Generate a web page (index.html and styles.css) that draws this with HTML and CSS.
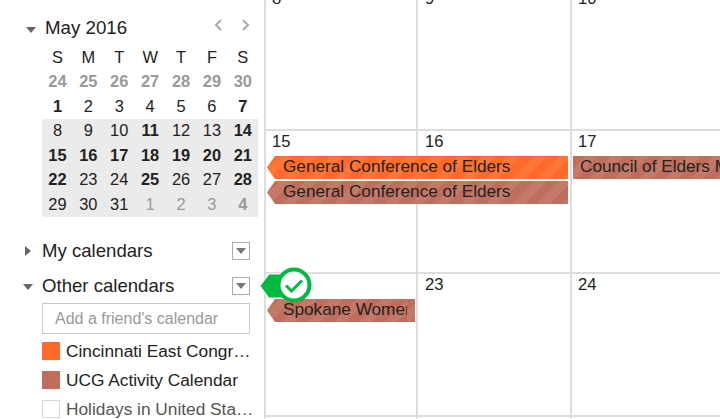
FILE: index.html
```html
<!DOCTYPE html>
<html lang="en">
<head>
    <meta charset="UTF-8">
    <title>Calendar</title>
    <link rel="stylesheet" href="styles.css">
</head>
<body>
    <div class="sidebar">
        <div class="month-header">
            <span class="arrow-down"></span>
            <span class="month-title">May 2016</span>
            <svg class="nav-arrows" width="46" height="14" viewBox="0 0 46 14">
                <path d="M11 2 L6 7 L11 12 M33 2 L38 7 L33 12" fill="none" stroke="#aaa" stroke-width="2"/>
            </svg>
        </div>
        <div class="mini-cal">
            <span class="wd">S</span><span class="wd">M</span><span class="wd">T</span><span class="wd">W</span><span class="wd">T</span><span class="wd">F</span><span class="wd">S</span>
            <b class="off">24</b><b class="off">25</b><b class="off">26</b><b class="off">27</b><b class="off">28</b><b class="off">29</b><b class="off">30</b>
            <b>1</b><span>2</span><span>3</span><span>4</span><span>5</span><span>6</span><b>7</b>
            <span class="sel">8</span><span class="sel">9</span><span class="sel">10</span><b class="sel">11</b><span class="sel">12</span><span class="sel">13</span><b class="sel">14</b>
            <b class="sel">15</b><b class="sel">16</b><b class="sel">17</b><b class="sel">18</b><b class="sel">19</b><b class="sel">20</b><b class="sel">21</b>
            <b class="sel">22</b><span class="sel">23</span><span class="sel">24</span><b class="sel">25</b><span class="sel">26</span><span class="sel">27</span><b class="sel">28</b>
            <span class="sel">29</span><span class="sel">30</span><span class="sel">31</span><span class="sel off">1</span><span class="sel off">2</span><span class="sel off">3</span><b class="sel off">4</b>
        </div>
        <div class="section my-cals">
            <span class="arrow-right"></span>
            <span class="section-title">My calendars</span>
            <span class="drop-btn"><span class="arrow-down small"></span></span>
        </div>
        <div class="section other-cals">
            <span class="arrow-down"></span>
            <span class="section-title">Other calendars</span>
            <span class="drop-btn"><span class="arrow-down small"></span></span>
            <svg class="callout" width="56" height="40" viewBox="0 0 56 40">
                <path d="M1 20 L10 8 H36 V32 H10 Z" fill="#00bb3f" stroke="#fff" stroke-width="1"/>
                <circle cx="35" cy="19" r="15.5" fill="#fff" stroke="#00bb3f" stroke-width="4"/>
                <path d="M27 19.5 L32.5 25 L43 14.5" fill="none" stroke="#00bb3f" stroke-width="3"/>
            </svg>
        </div>
        <div class="friend-input">Add a friend's calendar</div>
        <div class="cal-item"><span class="swatch orange"></span><span class="cal-name">Cincinnati East Congregation</span></div>
        <div class="cal-item"><span class="swatch brown"></span><span class="cal-name">UCG Activity Calendar</span></div>
        <div class="cal-item muted"><span class="swatch empty"></span><span class="cal-name">Holidays in United States</span></div>
    </div>
    <div class="main">
        <div class="week">
            <span class="day">8</span><span class="day">9</span><span class="day">10</span>
        </div>
        <div class="week">
            <span class="day">15</span><span class="day">16</span><span class="day">17</span>
            <div class="event orange-ev start span2">General Conference of Elders</div>
            <div class="event brown-ev cont">Council of Elders Meeting</div>
            <div class="event brown-ev start span2">General Conference of Elders</div>
        </div>
        <div class="week">
            <span class="day"></span><span class="day">23</span><span class="day">24</span>
            <div class="event brown-ev start clipped">Spokane Women's Enrichment</div>
        </div>
        <div class="week last"></div>
    </div>
</body>
</html>
```

FILE: styles.css
```css
body {
    font-family: "Liberation Sans", Arial, sans-serif;
    background-color: #ffffff;
    color: #222222;
    margin: 0;
    padding: 0;
    display: flex;
    height: 419px;
    overflow: hidden;
}

.sidebar {
    width: 264px;
    flex-shrink: 0;
    box-sizing: border-box;
    padding: 16px 14px 0 42px;
}

.month-header {
    display: flex;
    align-items: center;
    height: 24px;
    position: relative;
}

.month-title {
    margin-left: 3px;
    font-size: 18.7px;
}

.arrow-down {
    position: absolute;
    left: -16px;
    top: 11px;
    width: 0;
    height: 0;
    border-left: 5px solid transparent;
    border-right: 5px solid transparent;
    border-top: 6px solid #666666;
}

.arrow-down.small {
    position: static;
    display: block;
    border-top-color: #777777;
}

.arrow-right {
    position: absolute;
    left: -17px;
    top: 4px;
    width: 0;
    height: 0;
    border-top: 5px solid transparent;
    border-bottom: 5px solid transparent;
    border-left: 6px solid #666666;
}

.nav-arrows {
    position: absolute;
    left: 168px;
    top: 2px;
}

.mini-cal {
    display: grid;
    grid-template-columns: repeat(7, 30.9px);
    grid-auto-rows: 24.5px;
    margin-top: 5px;
    font-size: 16.4px;
}

.mini-cal span, .mini-cal b {
    display: flex;
    align-items: center;
    justify-content: center;
}

.mini-cal .sel {
    background-color: #ebebeb;
}

.mini-cal .off {
    color: #999999;
}

.section {
    position: relative;
    display: flex;
    align-items: center;
    height: 18px;
}

.my-cals {
    margin-top: 25px;
}

.other-cals {
    margin-top: 17px;
}

.other-cals .arrow-down {
    left: -19px;
    top: 7px;
}

.other-cals .section-title {
    padding-top: 1px;
}

.section-title {
    font-size: 18.6px;
}

.drop-btn {
    position: absolute;
    left: 190px;
    top: 0;
    box-sizing: border-box;
    width: 18px;
    height: 18px;
    border: 1px solid #aaaaaa;
    display: flex;
    align-items: center;
    justify-content: center;
}

.callout {
    position: absolute;
    left: 217px;
    top: -11px;
    z-index: 2;
}

.friend-input {
    box-sizing: border-box;
    width: 208px;
    height: 31px;
    margin-top: 8px;
    padding-left: 12px;
    border: 1px solid #c8c8c8;
    color: #999999;
    font-size: 16px;
    line-height: 29px;
}

.cal-item {
    display: flex;
    align-items: center;
    width: 212px;
    height: 18px;
    margin-top: 11px;
    font-size: 17.3px;
}

.friend-input + .cal-item {
    margin-top: 8px;
}

.cal-name {
    margin-left: 6px;
    padding-top: 1px;
    white-space: nowrap;
    overflow: hidden;
    text-overflow: ellipsis;
}

.cal-item.muted {
    color: #555555;
}

.swatch {
    flex-shrink: 0;
    box-sizing: border-box;
    width: 18px;
    height: 18px;
}

.swatch.orange {
    background-color: #ff6a2b;
}

.swatch.brown {
    background-color: #bf6d5c;
}

.swatch.empty {
    border: 1px solid #d8d8d8;
}

.main {
    flex: 1;
    margin-top: -14px;
}

.week {
    box-sizing: border-box;
    height: 143px;
    display: grid;
    grid-template-columns: 153px 153px 150px;
    grid-template-rows: 22px 23px 23px;
    row-gap: 2px;
    align-content: start;
    padding-top: 1px;
    border-top: 2px solid #dddddd;
    position: relative;
    background-image: linear-gradient(#dddddd, #dddddd);
    background-size: 2px 100%;
    background-repeat: no-repeat;
}

.week::before, .week::after {
    content: "";
    position: absolute;
    top: 0;
    bottom: 0;
    width: 2px;
    background-color: #dddddd;
}

.week::before {
    left: 152px;
}

.week::after {
    left: 306px;
}

.week:first-child {
    border-top: 0;
    padding-top: 3px;
}

.week.last {
    height: 4px;
}

.day {
    padding-left: 8px;
    font-size: 16.6px;
    line-height: 20px;
}

.event {
    position: relative;
    z-index: 1;
    box-sizing: border-box;
    height: 23px;
    font-size: 17.2px;
    line-height: 21px;
    white-space: nowrap;
    overflow: hidden;
    color: #222222;
}

.span2 {
    grid-column: span 2;
    margin-right: 2px;
}

.start {
    margin-left: 3px;
    padding-left: 16px;
    clip-path: polygon(0 50%, 8px 0, 100% 0, 100% 100%, 8px 100%);
}

.clipped {
    margin-right: 2px;
    border-right: 8px solid transparent;
}

.cont {
    margin-left: 3px;
    padding-left: 7px;
}

.orange-ev {
    background: repeating-linear-gradient(135deg, #ff6a2b 0 9px, #ff7638 9px 18px);
}

.brown-ev {
    background: repeating-linear-gradient(135deg, #bf6d5c 0 9px, #c57a69 9px 18px);
}
```
